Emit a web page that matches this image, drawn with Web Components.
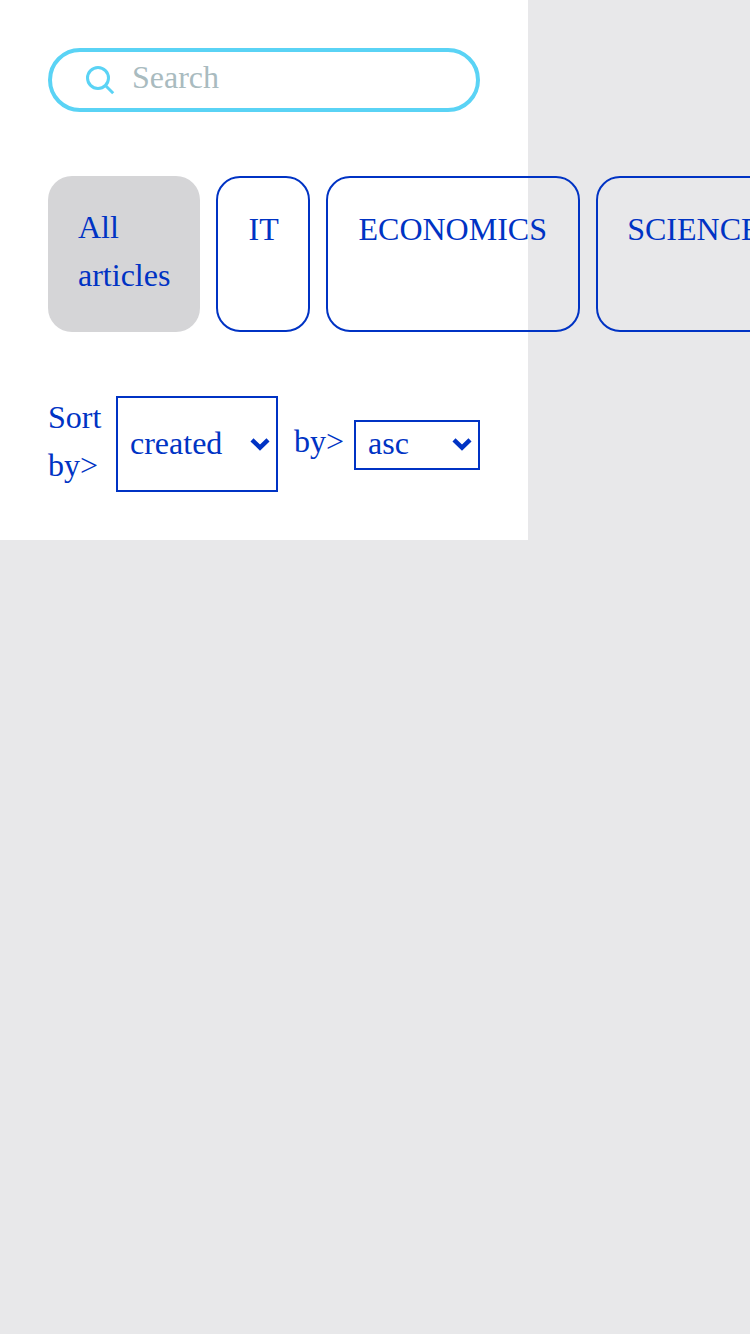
<!DOCTYPE html>
<html lang="en">
<head>
<meta charset="utf-8">
<title>Articles</title>
<style>
html, body { margin: 0; height: 100%; overflow: hidden; background: #e8e8ea; }
body { font: 32px/48px "Liberation Serif", "Times New Roman", serif; color: #0033c4; }
</style>
</head>
<body>
<article-filters></article-filters>
<script>
class BaseElement extends HTMLElement {
  connectedCallback() {
    if (this.shadowRoot) return;
    this.attachShadow({ mode: 'open' }).innerHTML = this.render();
  }
}

customElements.define('search-field', class extends BaseElement {
  render() {
    return `<style>
      :host { display: flex; box-sizing: border-box; height: 64px; border: 4px solid #5ad3f5; border-radius: 32px; padding: 0 32px; }
      svg { flex: none; width: 32px; height: 32px; margin-top: 12px; }
      span { margin-left: 16px; line-height: 50px; color: #a9bbbf; }
    </style>
    <svg viewBox="0 0 32 32" fill="none" stroke="#5ad3f5" stroke-width="3">
      <circle cx="14" cy="14" r="10.5"/><path d="M21.2 21.2L29.2 29.2"/>
    </svg><span><slot></slot></span>`;
  }
});

customElements.define('category-chip', class extends BaseElement {
  render() {
    return `<style>
      :host { display: block; flex: none; box-sizing: border-box; border: 2px solid #0033c4; border-radius: 24px; padding: 27px 30px 30px 30.5px; height: 156px; }
      :host([active]) { border: 0; background: #d5d5d7; width: 152px; padding-left: 30px; }
    </style><slot></slot>`;
  }
});

customElements.define('sort-select', class extends BaseElement {
  render() {
    return `<style>
      :host { display: flex; flex: none; box-sizing: border-box; align-items: center; justify-content: space-between; border: 2px solid #0033c4; padding: 0 6px 0 12px; }
      span { padding-bottom: var(--lift, 2px); }
      svg { width: 20px; height: 14px; overflow: visible; margin-bottom: var(--icon-lift, 0); }
    </style><span><slot></slot></span>
    <svg viewBox="0 0 20 14" fill="none" stroke="#0033c4" stroke-width="4.4"><path d="M2 2.8L10 10.6L18 2.8"/></svg>`;
  }
});

customElements.define('article-filters', class extends BaseElement {
  render() {
    return `<style>
      :host { display: block; box-sizing: border-box; width: 528px; height: 540px; padding: 48px; background: #fff; }
      nav { display: flex; gap: 16px; margin: 64px 0; }
      .it { width: 94px; }
      .economics { width: 254px; }
      .science { padding-left: 29.2px; }
      .sort { display: flex; align-items: center; height: 96px; }
      .sort label { flex: none; padding-bottom: 6px; }
      .first { width: 68px; }
      .created { width: 162px; height: 96px; margin-right: 16px; }
      .second { width: 60px; }
      .asc { width: 126px; height: 50px; margin-top: 2px; --lift: 4px; --icon-lift: 2px; }
    </style>
    <search-field>Search</search-field>
    <nav>
      <category-chip active>All articles</category-chip>
      <category-chip class="it">IT</category-chip>
      <category-chip class="economics">ECONOMICS</category-chip>
      <category-chip class="science">SCIENCE</category-chip>
    </nav>
    <div class="sort">
      <label class="first">Sort<br>by&gt;</label>
      <sort-select class="created">created</sort-select>
      <label class="second">by&gt;</label>
      <sort-select class="asc">asc</sort-select>
    </div>`;
  }
});
</script>
</body>
</html>
